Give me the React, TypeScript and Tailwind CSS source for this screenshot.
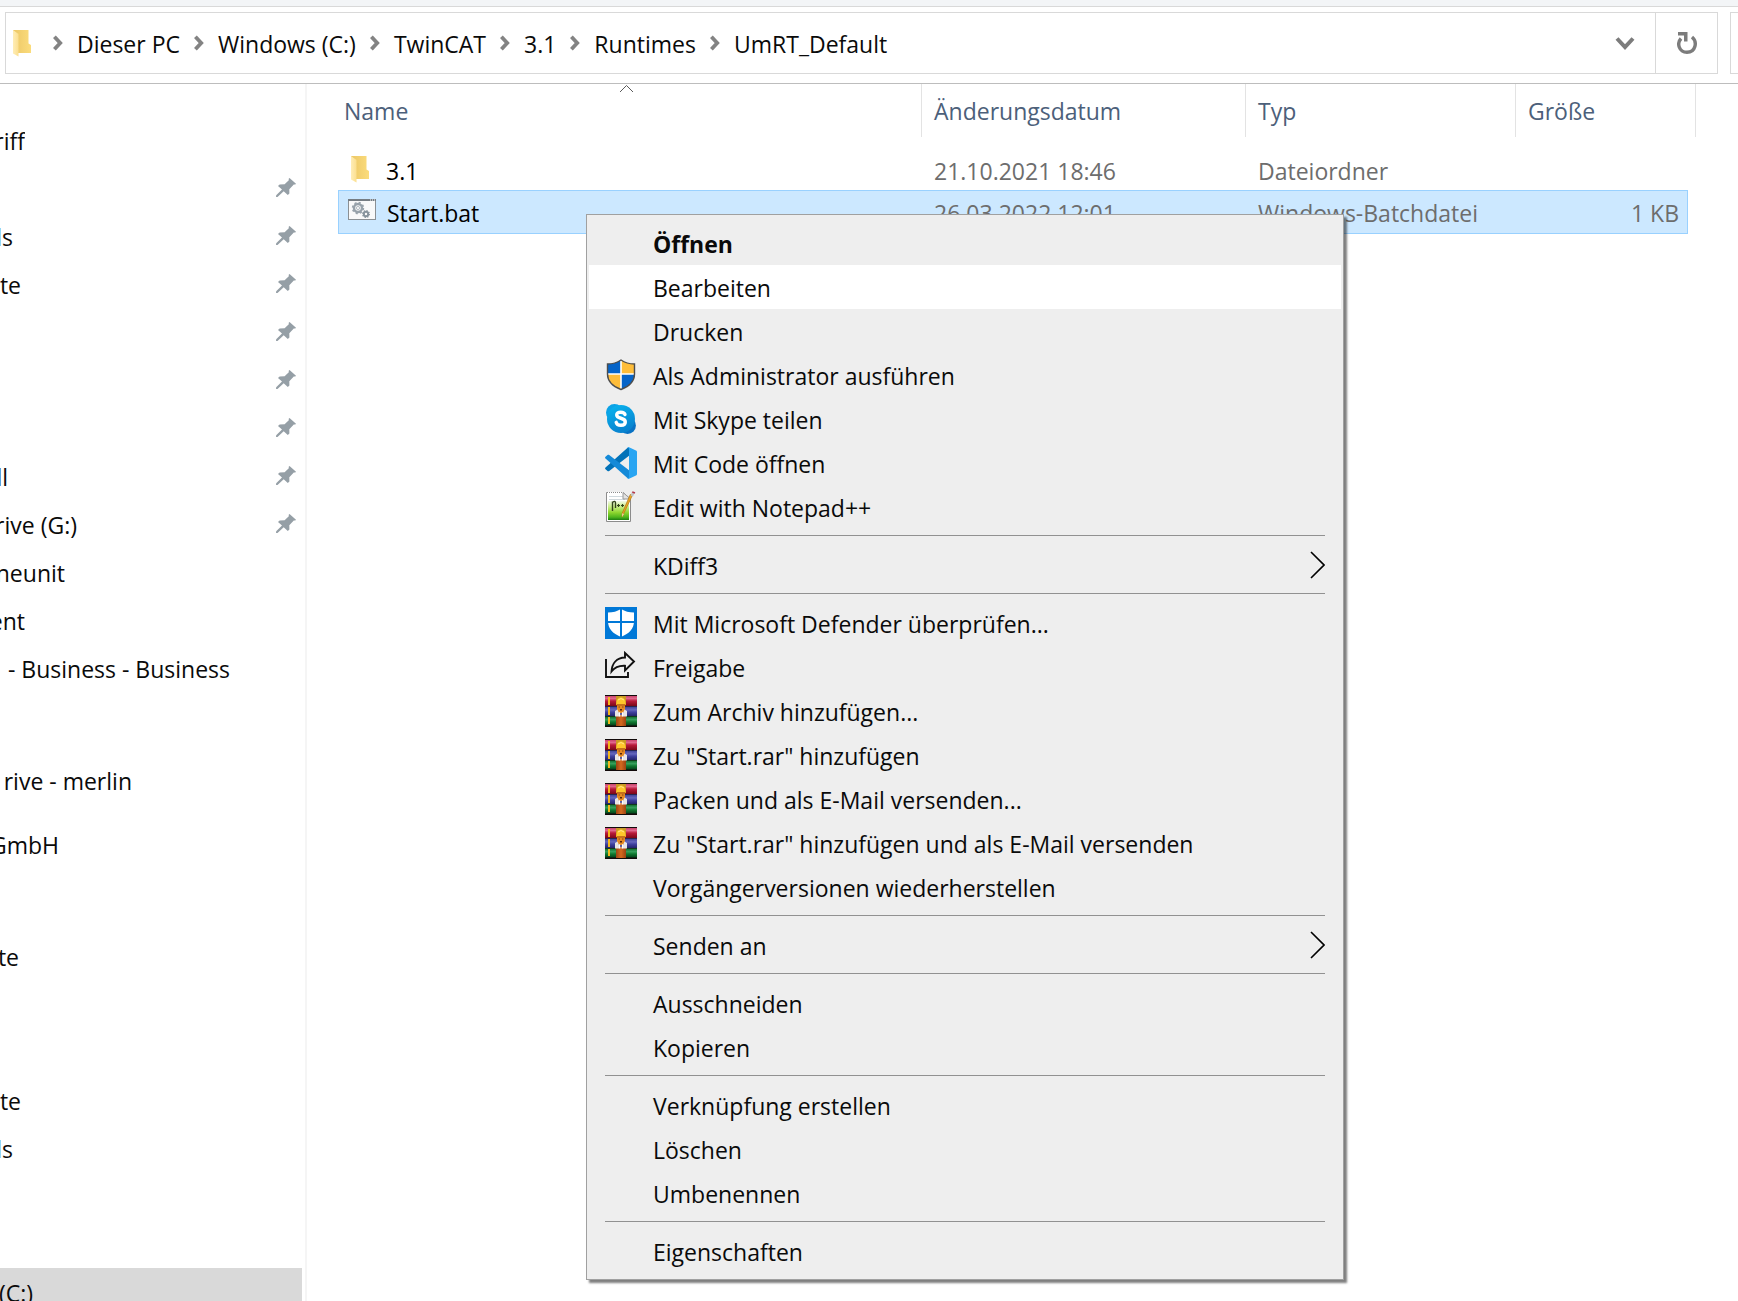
import type { ReactNode } from "react";

function FolderIcon() {
  return (
    <svg width="18" height="27" viewBox="0 0 18 27" aria-hidden="true">
      <defs>
        <linearGradient id="fback" x1="0" x2="1">
          <stop offset="0" stopColor="#ecc766" />
          <stop offset="1" stopColor="#fbdc7c" />
        </linearGradient>
        <linearGradient id="ffront" x1="0" x2="1">
          <stop offset="0" stopColor="#ffedb6" />
          <stop offset="1" stopColor="#fbdf90" />
        </linearGradient>
      </defs>
      <path d="M0 0H15.5V13.5L18 15V23H0Z" fill="url(#fback)" />
      <path d="M0 0L5.500 4V26.500L0 23.500Z" fill="url(#ffront)" />
    </svg>
  );
}

function BatchIcon() {
  return (
    <svg width="28" height="21" viewBox="0 0 28 21" aria-hidden="true">
      <rect x="0.5" y="0.5" width="27" height="20" fill="#f9f9f9" stroke="#8b9094" />
      <rect x="0" y="0" width="28" height="2" fill="#767d83" />
      <path d="M22 1h1M24 1h1M26 1h1" stroke="#fff" />
      <circle cx="10" cy="9" r="4" fill="none" stroke="#98a2aa" strokeWidth="2.4" />
      <circle cx="10" cy="9" r="5.4" fill="none" stroke="#98a2aa" strokeWidth="1.6" strokeDasharray="2.1 2.14" />
      <circle cx="10" cy="9" r="1.600" fill="none" stroke="#b6bec4" strokeWidth="1" />
      <circle cx="18" cy="15" r="2.200" fill="none" stroke="#87939c" strokeWidth="2" />
      <circle cx="18" cy="15" r="3.4" fill="none" stroke="#87939c" strokeWidth="1.200" strokeDasharray="1.33 1.34" />
    </svg>
  );
}

function PinIcon() {
  return (
    <svg width="20" height="19" viewBox="0 0 20 19" fill="#959fa6" aria-hidden="true">
      <path d="M13.500 0L20 5.700L19.300 6.600L17.800 6.400L13.300 11.200L13.400 15.600L11.800 17L7.700 13.300L1.500 18.900L0 19L0.200 17.300L6 11.600L2 8L3.600 6.400L8.600 6.200L12.800 2.300L12.700 0.800Z" />
    </svg>
  );
}

function CrumbChevron() {
  return (
    <svg width="10" height="16" viewBox="0 0 10 16" fill="none" stroke="#838383" strokeWidth="3.800" aria-hidden="true">
      <path d="M1.400 1.800L7.200 8L1.400 14.200" />
    </svg>
  );
}

function ShieldIcon() {
  return (
    <svg width="32" height="32" viewBox="0 0 32 32" aria-hidden="true">
      <defs>
        <clipPath id="uac">
          <path d="M16 1C12 3.800 7.500 5 2.500 5V15C2.500 22 8 27.500 16 30.500C24 27.500 29.500 22 29.500 15V5C24.500 5 20 3.800 16 1Z" />
        </clipPath>
      </defs>
      <g clipPath="url(#uac)">
        <path d="M0 0H16V15H0Z" fill="#0664c8" />
        <path d="M16 0H32V15H16Z" fill="#febd3a" />
        <path d="M0 15H16V32H0Z" fill="#febd3a" />
        <path d="M16 15H32V32H16Z" fill="#0664c8" />
        <path d="M16 0V32M0 15H32" stroke="#fff" strokeWidth="1.600" />
      </g>
      <path d="M16 1C12 3.800 7.500 5 2.500 5V15C2.500 22 8 27.500 16 30.500C24 27.500 29.500 22 29.500 15V5C24.500 5 20 3.800 16 1Z" fill="none" stroke="#4d4d4d" strokeWidth="1.400" />
    </svg>
  );
}

function SkypeIcon() {
  return (
    <svg width="32" height="32" viewBox="0 0 32 32" aria-hidden="true">
      <defs>
        <linearGradient id="sk" x1="0" y1="0" x2="0.4" y2="1">
          <stop offset="0" stopColor="#08b5f0" />
          <stop offset="1" stopColor="#0883cf" />
        </linearGradient>
      </defs>
      <circle cx="9.500" cy="9.500" r="8.500" fill="#0ba2e6" />
      <circle cx="22.500" cy="22.500" r="8.400" fill="#0872c4" />
      <circle cx="16" cy="16" r="14" fill="url(#sk)" />
      <path d="M20 11.500C19.500 9.800 18 9.200 15.700 9.200C13.200 9.200 11.700 10.200 11.700 12C11.700 16.300 20.300 14.200 20.300 18.900C20.300 21 18.500 22.200 15.900 22.200C13.300 22.200 11.600 21.200 11.200 19.300" fill="none" stroke="#fff" strokeWidth="3.400" strokeLinecap="round" />
    </svg>
  );
}

function CodeIcon() {
  return (
    <svg width="32" height="32" viewBox="0 0 32 32" aria-hidden="true">
      <path d="M0.500 20.400C-0.100 21 -0.100 21.600 0.500 22.200L2.500 24C3.100 24.400 3.700 24.400 4.200 24L24 8.800V0.500L22.600 0.800Z" fill="#0272b8" />
      <path d="M0.500 11.600C-0.100 11 -0.100 10.400 0.500 9.800L2.500 8C3.100 7.600 3.700 7.600 4.200 8L24 23.200V31.500L22.600 31.200Z" fill="#148ad8" />
      <path d="M23.500 0L31 3.400C31.600 3.700 32 4.200 32 5V27C32 27.800 31.600 28.300 31 28.600L23.500 32C22.800 31.700 22.600 31.400 22.400 31C23.400 31.300 24 30.800 24 29.700V2.300C24 1.200 23.400 0.700 22.400 1C22.600 0.600 22.800 0.300 23.500 0Z" fill="#29a5f2" />
    </svg>
  );
}

function NotepadIcon() {
  return (
    <svg width="32" height="32" viewBox="0 0 32 32" aria-hidden="true">
      <defs>
        <linearGradient id="np" x1="0" y1="0" x2="0" y2="1">
          <stop offset="0" stopColor="#f2f9e8" />
          <stop offset="0.3" stopColor="#c9ee88" />
          <stop offset="0.6" stopColor="#8fd630" />
          <stop offset="0.850" stopColor="#4eb51c" />
          <stop offset="1" stopColor="#1d7d12" />
        </linearGradient>
      </defs>
      <path d="M1.500 1.500H18L25.500 8V30.500H1.500Z" fill="#fff" stroke="#8c8c8c" />
      <path d="M3 1.500H18" stroke="#fff" strokeDasharray="1 1" />
      <path d="M4 5.500H18M4 8.500H20" stroke="#cfd8dc" />
      <rect x="3" y="10" width="21" height="19" fill="url(#np)" />
      <path d="M18 1.500V8H25.500Z" fill="#e2e2e2" stroke="#999" />
      <path d="M7.500 20V10.500M7.500 11.500Q10.500 9 10.500 12V17" fill="none" stroke="#34441c" strokeWidth="1.400" />
      <path d="M12 14.500H15M13.500 13V16M16 14.500H19M17.500 13V16" stroke="#34441c" strokeWidth="1.200" />
      <path d="M27.500 4L18.500 23L17 26L17.300 22L25.300 3.500Z" fill="#eda724" stroke="#b87c19" strokeWidth="0.800" />
      <path d="M17 26L17.200 22.300L19 23Z" fill="#f2d6a4" />
      <path d="M25.500 4.500L27 1.200L29.500 2.200L28 5.500Z" fill="#bfc4c8" />
      <path d="M26.800 1.600L27.600 0.200L30.300 1.200L29.600 2.800Z" fill="#b5384a" />
    </svg>
  );
}

function DefenderIcon() {
  return (
    <svg width="32" height="32" viewBox="0 0 32 32" aria-hidden="true">
      <rect width="32" height="32" fill="#0078d7" />
      <path d="M16 2C12 4.500 8 5.500 3 5.500V14C3 21.500 7.500 26.500 16 30C24.500 26.500 29 21.500 29 14V5.500C24 5.500 20 4.500 16 2Z" fill="#fff" />
      <path d="M16 1V31M2 15H30" stroke="#0078d7" strokeWidth="2" />
    </svg>
  );
}

function ShareIcon() {
  return (
    <svg width="32" height="32" viewBox="0 0 32 32" fill="none" stroke="#111" strokeWidth="1.900" aria-hidden="true">
      <path d="M1 8V26H23V21" />
      <path d="M20 2L29 10.500L20 19.500V14.800C13.500 14.500 9.500 16.500 6.500 20.500C7 12.500 11.500 6.800 20 6.500Z" />
    </svg>
  );
}

function ArchiveIcon() {
  return (
    <svg width="32" height="32" viewBox="0 0 32 32" aria-hidden="true">
      <defs>
        <linearGradient id="bkR" x1="0" y1="0" x2="0" y2="1">
          <stop offset="0" stopColor="#c9446c" />
          <stop offset="0.250" stopColor="#e0668c" />
          <stop offset="0.500" stopColor="#b81a3a" />
          <stop offset="1" stopColor="#7a0717" />
        </linearGradient>
        <linearGradient id="bkB" x1="0" y1="0" x2="0" y2="1">
          <stop offset="0" stopColor="#3c3f94" />
          <stop offset="0.350" stopColor="#6567bd" />
          <stop offset="0.600" stopColor="#3f419f" />
          <stop offset="1" stopColor="#23246a" />
        </linearGradient>
        <linearGradient id="bkG" x1="0" y1="0" x2="0" y2="1">
          <stop offset="0" stopColor="#0f6a2c" />
          <stop offset="0.350" stopColor="#37a05c" />
          <stop offset="0.600" stopColor="#107a30" />
          <stop offset="1" stopColor="#05401a" />
        </linearGradient>
        <linearGradient id="strap" x1="0" x2="1">
          <stop offset="0" stopColor="#9c4312" />
          <stop offset="0.5" stopColor="#d46a1f" />
          <stop offset="1" stopColor="#9c4312" />
        </linearGradient>
      </defs>
      <rect width="32" height="32" fill="#120a0a" />
      <rect y="1" width="32" height="10" fill="url(#bkR)" />
      <rect y="11.500" width="32" height="9.500" fill="url(#bkB)" />
      <rect y="21.500" width="32" height="9" fill="url(#bkG)" />
      <path d="M4 2V10M4 12V20M4 22V29" stroke="#f4b81c" strokeWidth="2" />
      <path d="M11 1H21V10H11Z" fill="#c99a24" />
      <path d="M11 20H21V31H11Z" fill="url(#strap)" />
      <path d="M11.500 8C11.500 0.800 20.500 0.800 20.500 8L21 10H11Z" fill="#ffc62b" />
      <path d="M13 5Q16 2 19 5" stroke="#ffe98c" fill="none" />
      <path d="M12 9H20V16L18 18H14L12 16Z" fill="#e58a24" />
      <path d="M11.500 10H20.500" stroke="#a85a10" strokeWidth="1" />
      <path d="M13.500 12H15M17 12H18.500" stroke="#8a4510" strokeWidth="1" />
      <path d="M15 14H17V15.500H15Z" fill="#54230a" />
      <path d="M10 16L12.500 14.500L14 18L14.500 21.500H10Z" fill="#e9e6e6" />
      <path d="M22 16L19.500 14.500L18 18L17.500 21.500H22Z" fill="#e9e6e6" />
      <path d="M14 17.500L15 17L15.500 21.500H14Z" fill="#fff" />
      <path d="M18 17.500L17 17L16.500 21.500H18Z" fill="#fff" />
    </svg>
  );
}

type MenuEntry = { label: string; icon?: ReactNode; bold?: boolean; active?: boolean; submenu?: boolean };

const menuGroups: MenuEntry[][] = [
  [
    { label: "Öffnen", bold: true },
    { label: "Bearbeiten", active: true },
    { label: "Drucken" },
    { label: "Als Administrator ausführen", icon: <ShieldIcon /> },
    { label: "Mit Skype teilen", icon: <SkypeIcon /> },
    { label: "Mit Code öffnen", icon: <CodeIcon /> },
    { label: "Edit with Notepad++", icon: <NotepadIcon /> },
  ],
  [{ label: "KDiff3", submenu: true }],
  [
    { label: "Mit Microsoft Defender überprüfen...", icon: <DefenderIcon /> },
    { label: "Freigabe", icon: <ShareIcon /> },
    { label: "Zum Archiv hinzufügen...", icon: <ArchiveIcon /> },
    { label: 'Zu "Start.rar" hinzufügen', icon: <ArchiveIcon /> },
    { label: "Packen und als E-Mail versenden...", icon: <ArchiveIcon /> },
    { label: 'Zu "Start.rar" hinzufügen und als E-Mail versenden', icon: <ArchiveIcon /> },
    { label: "Vorgängerversionen wiederherstellen" },
  ],
  [{ label: "Senden an", submenu: true }],
  [{ label: "Ausschneiden" }, { label: "Kopieren" }],
  [{ label: "Verknüpfung erstellen" }, { label: "Löschen" }, { label: "Umbenennen" }],
  [{ label: "Eigenschaften" }],
];

function ContextMenu() {
  return (
    <div
      role="menu"
      className="absolute left-[586px] top-[214px] w-[758px] border border-[#a0a0a0] bg-[#eeeeee] px-0.5 py-1.5 shadow-[3px_3px_2px_rgba(0,0,0,0.5)]"
    >
      {menuGroups.map((group, g) => (
        <div key={g} role="group">
          {g > 0 && <hr className="mx-4 mt-1.5 mb-[7px] border-t border-[#919191]" />}
          {group.map((e) => (
            <button
              key={e.label}
              role="menuitem"
              className={`flex h-11 w-full items-center gap-4 px-4 text-left ${e.active ? "bg-white" : ""} ${e.bold ? "font-bold" : ""}`}
            >
              <span className="w-8 shrink-0">{e.icon}</span>
              <span className="grow whitespace-nowrap pt-0.5">{e.label}</span>
              {e.submenu && (
                <svg width="15" height="28" viewBox="0 0 15 28" fill="none" stroke="#000" strokeWidth="1.600" aria-hidden="true">
                  <path d="M1 1L14 14L1 27" />
                </svg>
              )}
            </button>
          ))}
        </div>
      ))}
    </div>
  );
}

type NavRow = { text?: string; end?: string; pin?: boolean; spaced?: boolean; selected?: boolean };

const navRows: NavRow[] = [
  { text: "riff", end: "w-[25px]" },
  { pin: true },
  { text: "ls", end: "w-[13px]", pin: true },
  { text: "te", end: "w-[21px]", pin: true },
  { pin: true },
  { pin: true },
  { pin: true },
  { text: "ll", end: "w-[8px]", pin: true },
  { text: "rive (G:)", end: "w-[77px]", pin: true },
  { text: "neunit", end: "w-[65px]" },
  { text: "ent", end: "w-[25px]" },
  { text: "- Business - Business", end: "w-[230px]" },
  {},
  { text: "rive - merlin", end: "w-[132px]", spaced: true },
  { text: "GmbH", end: "w-[59px]", spaced: true },
  {},
  { text: "te", end: "w-[19px]", spaced: true },
  {},
  {},
  { text: "te", end: "w-[21px]" },
  { text: "ls", end: "w-[13px]" },
  {},
  {},
  { text: "(C:)", end: "w-[33px]", selected: true },
];

function Sidebar() {
  return (
    <nav className="w-[307px] shrink-0 overflow-hidden border-r-2 border-[#f5f5f5] pt-8 pr-[3px]">
      {navRows.map((r, i) => (
        <div
          key={i}
          className={`flex h-12 items-center justify-between pr-1.5 ${r.spaced ? "mt-4" : ""} ${r.selected ? "bg-[#d9d9d9]" : ""}`}
        >
          {r.text ? (
            <a href="#" className={`flex shrink-0 justify-end overflow-hidden whitespace-nowrap pt-0.5 ${r.end}`}>
              <span>{r.text}</span>
            </a>
          ) : (
            <span />
          )}
          {r.pin && (
            <span className="pb-0.5">
              <PinIcon />
            </span>
          )}
        </div>
      ))}
    </nav>
  );
}

const crumbs = ["Dieser PC", "Windows (C:)", "TwinCAT", "3.1", "Runtimes", "UmRT_Default"];

function AddressBar() {
  return (
    <div className="flex h-[62px] shrink-0 gap-3 pl-[5px]">
      <div className="flex grow border border-[#d9d9d9]">
        <div className="flex grow items-center pl-[7px]">
          <FolderIcon />
          <ol className="flex items-center pl-2">
            {crumbs.map((c) => (
              <li key={c} className="flex items-center gap-[14px] pl-[14px]">
                <CrumbChevron />
                <button className="whitespace-nowrap pt-0.5">{c}</button>
              </li>
            ))}
          </ol>
        </div>
        <button aria-label="Verlauf" className="flex w-[60px] items-center justify-center">
          <svg width="20" height="14" viewBox="0 0 20 14" fill="none" stroke="#7c7c7c" strokeWidth="4" aria-hidden="true">
            <path d="M2 2.500L10 11L18 2.500" />
          </svg>
        </button>
        <button aria-label="Aktualisieren" className="flex w-[62px] items-center justify-center border-l border-[#d9d9d9]">
          <svg width="20" height="22" viewBox="0 0 20 22" fill="none" aria-hidden="true">
            <path d="M4 6.500C-0.500 11.500 2 20.300 10 20.300C18.500 20.300 20.800 10 15 5" stroke="#7c7c7c" strokeWidth="3.400" />
            <path d="M1 0H10.500V9.500H7V3.500H1Z" fill="#7c7c7c" />
          </svg>
        </button>
      </div>
      <div className="w-2 border border-r-0 border-[#d9d9d9]" />
    </div>
  );
}

type FileRow = { icon: ReactNode; name: string; date: string; type: string; size: string; selected?: boolean };

const files: FileRow[] = [
  { icon: <FolderIcon />, name: "3.1", date: "21.10.2021 18:46", type: "Dateiordner", size: "" },
  { icon: <BatchIcon />, name: "Start.bat", date: "26.03.2022 12:01", type: "Windows-Batchdatei", size: "1 KB", selected: true },
];

function FileList() {
  return (
    <main className="grow pl-[31px] pr-[42px]">
      <table className="w-full table-fixed border-separate border-spacing-0 whitespace-nowrap">
        <colgroup>
          <col />
          <col className="w-[324px]" />
          <col className="w-[270px]" />
          <col className="w-[172px]" />
          <col className="w-[8px]" />
        </colgroup>
        <thead className="text-left text-[#4c607a]">
          <tr className="h-[53px]">
            <th className="relative border-r border-[#e3e3e3] p-0 pl-1.5 font-normal">
              Name
              <svg className="absolute left-[281px] top-0" width="15" height="9" viewBox="0 0 15 9" fill="none" stroke="#5a5a5a" aria-hidden="true">
                <path d="M1 8L7.500 1.500L14 8" />
              </svg>
            </th>
            <th className="border-r border-[#e3e3e3] p-0 pl-3 font-normal">Änderungsdatum</th>
            <th className="border-r border-[#e3e3e3] p-0 pl-3 font-normal">Typ</th>
            <th className="p-0 pl-3 font-normal">Größe</th>
            <td className="border-r border-[#e3e3e3] p-0" />
          </tr>
        </thead>
        <tbody className="text-[#6d6d6d]">
          <tr className="h-2.5" aria-hidden="true">
            <td colSpan={5} className="p-0" />
          </tr>
          {files.map((f) => {
            const cell = f.selected ? "pt-0.5 h-11 border-y border-[#99d1ff] bg-[#cce8ff]" : "pt-1 h-[43px]";
            return (
              <tr key={f.name} aria-selected={!!f.selected}>
                <td className={`pb-0 pr-0 text-black ${cell} ${f.selected ? "border-l pl-0" : "pl-0"}`}>
                  <div className="flex items-center gap-2 pl-2">
                    <span className={`flex w-8 shrink-0 ${f.selected ? "pb-2 pl-px" : "pb-0.5 pl-[5px]"}`}>{f.icon}</span>
                    {f.name}
                  </div>
                </td>
                <td className={`pr-0 pb-0 pl-3 ${cell}`}>{f.date}</td>
                <td className={`pr-0 pb-0 pl-3 ${cell}`}>{f.type}</td>
                <td className={`pb-0 pl-0 pr-2 text-right ${cell} ${f.selected ? "border-r" : ""}`}>{f.size}</td>
                <td className="p-0" />
              </tr>
            );
          })}
        </tbody>
      </table>
    </main>
  );
}

export default function App() {
  return (
    <div className="relative flex h-screen flex-col overflow-hidden bg-white font-['Open_Sans',sans-serif] text-[23px] leading-8 text-[#0a0a0a]">
      <div className="h-[7px] shrink-0 border-b border-[#d9d9d9] bg-[#f3f5f7]" />
      <div className="shrink-0 border-b border-[#bdbdbd] pt-[5px] pb-[9px]">
        <AddressBar />
      </div>
      <div className="flex min-h-0 grow">
        <Sidebar />
        <FileList />
      </div>
      <ContextMenu />
    </div>
  );
}
